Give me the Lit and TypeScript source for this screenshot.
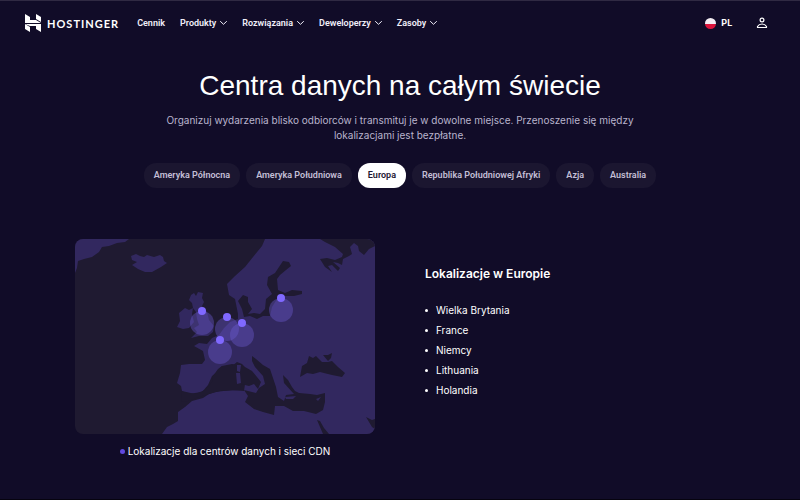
import { LitElement, html, css, svg } from "lit";
import { customElement, state } from "lit/decorators.js";

const MENU = ["Produkty", "Rozwiązania", "Deweloperzy", "Zasoby"];
const REGIONS = ["Ameryka Północna", "Ameryka Południowa", "Europa", "Republika Południowej Afryki", "Azja", "Australia"];
const PLACES = ["Wielka Brytania", "France", "Niemcy", "Lithuania", "Holandia"];
const PINS = [[127, 72], [152, 78], [167, 84], [145, 101], [206, 59]];

@customElement("europe-map")
class EuropeMap extends LitElement {
  static styles = css`
    :host { display: block; }
    .map { display: block; width: 100%; height: auto; border-radius: 8px; background: #1f1a31; }
    .land { fill: #32285f; }
    .sea { fill: #1f1a31; }
    .halo { fill: #6c5bd0; fill-opacity: 0.4; }
    .pin { fill: #8069ff; }
  `;
  render() {
    return html`<svg class="map" viewBox="0 0 300 195" role="img" aria-label="Mapa Europy">
      <g class="land">
        <path d="M0 0H54L50 3L42 4L34 7L27 8L24 13L17 18L9 20L3 22L2 29L0 34Z" />
        <path d="M56 17L61 15L65 17L69 18L72 16L79 18L85 16L88 18L89 22L92 24L86 28L77 33L70 33L63 30L57 26L62 23L57 21Z" />
        <path d="M116 56L119 54L121 57L123 53L128 54L127 59L129 63L127 67L132 73L134 81L139 87L138 93L133 97L124 97L116 99L122 93L119 89L124 86L122 80L121 73L118 69L117 64L114 61Z" />
        <path d="M110 69L114 71L118 69L117 75L119 83L114 89L108 90L102 88L105 82L104 74Z" />
        <path d="M190 0H300V195H87L92 188L98 185L103 182V173L110 168L117 162L128 159L134 155L140 153L157 151L169 152L170 145L163 126L157 125L147 127L142 133L137 137L133 146L127 153L113 155L107 152L106 147L102 144L105 134L106 126L114 125L127 125L130 121L128 112L119 107L124 104L132 105L137 99L144 96L149 89L155 83L163 80V75L161 65L160 60L154 56L152 45L160 37L170 28L178 18L187 7Z" />
      </g>
      <g class="sea">
        <path d="M163 62L168 56L173 58V63L177 70L173 75L179 74L185 75L190 70L191 60L197 55L192 46L193 38L200 34L204 28L208 22L214 23L216 27L211 31L205 36L202 40L203 51L210 54L217 51L227 52L227 55L219 57L208 57L202 60L197 68L195 77L188 77L182 80L175 77L169 78L167 70Z" />
        <path d="M245 0H300V7L294 10L289 16L284 12L283 7L279 4L275 8L277 15L274 17L268 20L267 26L263 24L258 23L265 29L263 32L257 26L253 27L257 33L250 28L245 20L252 19L260 21L267 18L268 15L260 8L250 3Z" />
        <path d="M138 137L143 130L147 127L157 127L162 123L167 125L170 128L177 132L182 138L186 143L183 150L179 145L174 147L166 145V151L145 152L127 157L113 162L106 163L107 152L120 155L130 151L137 143Z" />
        <path d="M177 117L181 120L188 126L195 130L198 139L201 148L203 158L209 162L211 156L219 155L209 144L208 136L213 141L217 148L220 152L224 154L235 155L242 156L250 154L250 163L248 171L241 175L229 172L218 172L209 167L200 167L199 176L188 173L179 170L170 163L173 157L169 151L181 154L184 149L190 145L188 137L180 128L177 122Z" />
        <path d="M225 138L227 127L232 124L234 117L238 119L241 117L247 123L253 123L257 122L263 128L270 134L267 138L257 136L245 133L238 135L232 134Z" />
        <path d="M248 116L253 116L257 114L256 119L253 122Z" />
        <path d="M242 181L245 182L249 189L254 195H248Z" />
        <path d="M291 178L297 181L300 180V190L297 188Z" />
      </g>
      <g class="land">
        <path d="M162 126L166 126L165 133L162 132ZM161 134L165 134L166 144L162 145Z" />
        <path d="M210 158L221 157L218 160L211 160ZM241 160L246 158L243 162Z" />
      </g>
      ${PINS.map(([x, y]) => svg`<circle class="halo" cx=${x} cy=${y + 12} r="12" />`)}
      ${PINS.map(([x, y]) => svg`<circle class="pin" cx=${x} cy=${y} r="4" />`)}
    </svg>`;
  }
}

@customElement("app-root")
class AppRoot extends LitElement {
  @state() private region = "Europa";

  static styles = css`
    :host {
      display: flex; flex-direction: column; min-height: 100vh; box-sizing: border-box;
      background: #110c28; color: #fff; border-top: 1px solid #302a43; border-bottom: 1px solid #06030f;
      font-family: Inter, "Liberation Sans", sans-serif; font-size: 10px; line-height: 15px;
    }
    button { font: inherit; color: inherit; background: none; border: 0; padding: 0; cursor: pointer; }
    a { color: inherit; text-decoration: none; }
    .bar { display: flex; align-items: center; height: 44px; padding: 0 32px 0 25px; font-family: Roboto, sans-serif; font-size: 9px; font-weight: 600; }
    .brand { display: flex; align-items: center; gap: 5px; font-family: Lato, sans-serif; font-size: 11px; font-weight: 700; letter-spacing: 1px; }
    .mark { flex: none; width: 17px; height: 18px; fill: #fff; }
    .nav { display: flex; gap: 15px; margin-left: 18px; color: #f1effa; }
    .item { display: flex; align-items: center; gap: 4px; }
    .line { fill: none; stroke: currentColor; stroke-linecap: round; stroke-linejoin: round; }
    .chevron { width: 7px; height: 4px; }
    .tools { display: flex; align-items: center; gap: 24px; margin-left: auto; }
    .lang { gap: 5px; font-weight: 700; }
    .flag { width: 11px; height: 11px; border-radius: 50%; background: linear-gradient(#f4eef3 50%, #dc143c 50%); }
    .user { display: block; width: 12px; height: 12px; }
    .intro { display: flex; flex-direction: column; align-items: center; padding: 21px 16px 0; text-align: center; }
    h1 { margin: 0; font-family: "Liberation Sans", sans-serif; font-size: 28px; line-height: 40px; font-weight: 400; }
    .lead { max-width: 480px; margin: 7px 0 0; color: #b9b4cd; }
    .tabs { display: flex; flex-wrap: wrap; justify-content: center; gap: 6px; margin-top: 20px; }
    .tab { height: 25px; padding: 0 10px; border-radius: 12px; background: #1b1630; color: #c4bfd6; font-family: Roboto, sans-serif; font-size: 9px; font-weight: 600; }
    .tab[aria-pressed="true"] { background: #fff; color: #1d1733; }
    .content { display: grid; grid-template-columns: 1fr 1fr; gap: 50px; box-sizing: border-box; width: 100%; max-width: 682px; margin: 51px auto 0; padding: 0 16px; }
    figure { margin: 0; }
    figcaption { display: flex; align-items: center; justify-content: center; gap: 3px; margin-top: 10px; }
    .key { width: 5px; height: 5px; border-radius: 50%; background: #6049e0; }
    .places { padding-top: 25px; }
    h2 { margin: 0; font-size: 12px; line-height: 20px; font-weight: 600; }
    ul { list-style: none; margin: 16px 0 0; padding: 0; line-height: 20px; }
    li { display: flex; align-items: center; gap: 8px; }
    li::before { content: ""; width: 3px; height: 3px; border-radius: 50%; background: #fff; }
  `;

  render() {
    return html`
      <header class="bar">
        <a class="brand" href="#">
          <svg class="mark" viewBox="0 0 17 18" aria-hidden="true">
            <path d="M0 0L5 3V6H11L16 9H0Z" />
            <path d="M11 0L16 3V8L11 5Z" />
            <path d="M0 10H16V18L11 15V12H5L0 10Z" />
            <path d="M0 10L5 13V18L0 15Z" />
          </svg>
          HOSTINGER
        </a>
        <nav class="nav">
          <a class="item" href="#">Cennik</a>
          ${MENU.map((name) => html`<button class="item">${name}
            <svg class="line chevron" viewBox="0 0 7 4" aria-hidden="true"><path d="M0.5 0.5L3.5 3.3L6.5 0.5" /></svg>
          </button>`)}
        </nav>
        <div class="tools">
          <button class="item lang"><span class="flag"></span>PL</button>
          <button aria-label="Konto">
            <svg class="line user" viewBox="0 0 12 12" aria-hidden="true">
              <circle cx="6" cy="3" r="1.9" stroke-width="1.2" />
              <path d="M1.5 10.5V9.5C2.5 7.8 4 7 6 7S9.5 7.8 10.5 9.5V10.5Z" stroke-width="1.2" />
            </svg>
          </button>
        </div>
      </header>
      <main>
        <section class="intro">
          <h1>Centra danych na całym świecie</h1>
          <p class="lead">Organizuj wydarzenia blisko odbiorców i transmituj je w dowolne miejsce. Przenoszenie się między lokalizacjami jest bezpłatne.</p>
          <div class="tabs">
            ${REGIONS.map((name) => html`<button class="tab" aria-pressed=${name === this.region} @click=${() => (this.region = name)}>${name}</button>`)}
          </div>
        </section>
        <section class="content">
          <figure>
            <europe-map></europe-map>
            <figcaption><span class="key"></span>Lokalizacje dla centrów danych i sieci CDN</figcaption>
          </figure>
          <div class="places">
            <h2>Lokalizacje w Europie</h2>
            <ul>${PLACES.map((name) => html`<li>${name}</li>`)}</ul>
          </div>
        </section>
      </main>
    `;
  }
}
